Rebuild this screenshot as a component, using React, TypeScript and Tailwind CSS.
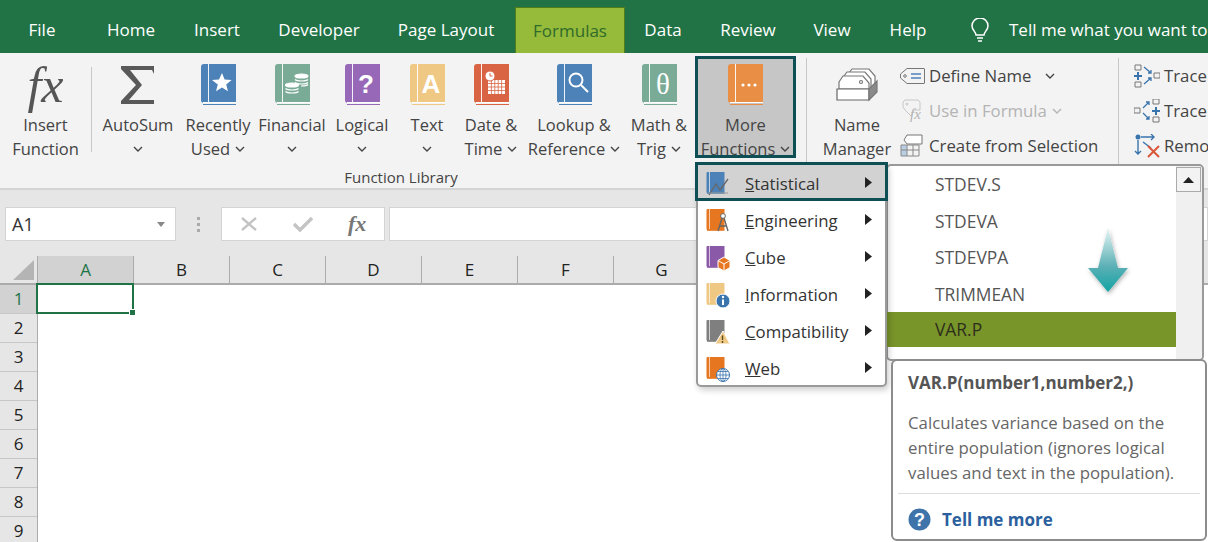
import type { ReactNode } from 'react'

const font = "font-['Open_Sans','Noto_Sans',sans-serif]"

function Chevron({ className = '' }: { className?: string }) {
  return (
    <svg width="10" height="6" viewBox="0 0 10 6" className={className}>
      <path d="M1 1l4 4 4-4" fill="none" stroke="#444" strokeWidth="1.4" />
    </svg>
  )
}

function Book({ color, children }: { color: string; children?: ReactNode }) {
  return (
    <svg width="35" height="41" viewBox="0 0 35 41">
      <path d="M3 0h32v39H3a3 3 0 0 1-3-3V3a3 3 0 0 1 3-3z" fill={color} />
      <rect x="7" y="0" width="1" height="38" fill="#fff" opacity="0.9" />
      <rect x="2" y="38" width="33" height="1" fill="#fff" />
      <rect x="2" y="40" width="33" height="1" fill={color} />
      {children}
    </svg>
  )
}

function Item({ w, color, glyph, lines, icon }: { w: string; color?: string; glyph?: ReactNode; lines: ReactNode[]; icon?: ReactNode }) {
  return (
    <div className={`${w} flex flex-col items-center shrink-0 pt-[11px] text-[#444]`}>
      <div className="h-[41px] flex items-center justify-center">{icon ?? <Book color={color!}>{glyph}</Book>}</div>
      <div className="mt-[8px] text-center leading-[24px] text-[16.5px] whitespace-nowrap">
        {lines.map((l, i) => (
          <div key={i} className="h-[24px] flex items-center justify-center gap-[5px]">{l}</div>
        ))}
      </div>
    </div>
  )
}

function Tab({ w, children }: { w: string; children: ReactNode }) {
  return <div className={`${w} text-center text-white text-[17px] shrink-0`}>{children}</div>
}

function MiniBook({ color, children }: { color: string; children?: ReactNode }) {
  return (
    <svg width="24" height="26" viewBox="0 0 24 26" className="shrink-0">
      <path d="M1.5 0h17v21h-17a1 1 0 0 1-1-1V1a1 1 0 0 1 1-1z" fill={color} />
      <rect x="3" y="0" width="0.8" height="20" fill="#fff" opacity="0.8" />
      <rect x="1" y="21" width="17.5" height="0.8" fill={color} />
      {children}
    </svg>
  )
}

function MenuRow({ label, letter, children, active }: { label: string; letter: string; children: ReactNode; active?: boolean }) {
  return (
    <div className="h-[37px] flex items-center relative z-10 text-[#333] text-[16.8px]">
      {active && <div className="absolute -left-[3px] -right-[3px] -top-[3px] bottom-[1px] -z-10 bg-[#d2d2d2] border-[3px] border-[#0e4f56]" />}
      <div className="w-[47px] pl-[8px] pt-[2px]">{children}</div>
      <span className="whitespace-nowrap">
        <u>{letter}</u>
        {label}
      </span>
      <svg width="7" height="11" viewBox="0 0 7 11" className="absolute left-[167px] top-[12px]">
        <path d="M0 0l7 5.5L0 11z" fill="#222" />
      </svg>
    </div>
  )
}

const rowNums = [1, 2, 3, 4, 5, 6, 7, 8, 9]
const cols = ['A', 'B', 'C', 'D', 'E', 'F', 'G', '', '', '', '', '']
const subItems = ['STDEV.S', 'STDEVA', 'STDEVPA', 'TRIMMEAN']

export default function App() {
  return (
    <div className={`${font} relative w-[1208px] h-[542px] overflow-hidden bg-white`}>
      {/* Tabs */}
      <div className="h-[53px] bg-[#217346] flex items-center pt-[7px] relative">
        <Tab w="w-[84px]">File</Tab>
        <Tab w="w-[94px]">Home</Tab>
        <Tab w="w-[78px]">Insert</Tab>
        <Tab w="w-[126px]">Developer</Tab>
        <Tab w="w-[128px]">Page Layout</Tab>
        <div className="w-[110px] h-[46px] ml-[5px] self-end flex items-center justify-center bg-[#96ba3a] border border-b-0 border-[#4f7d1a] text-[#2f6b2a] text-[17px] shrink-0">Formulas</div>
        <Tab w="w-[76px]">Data</Tab>
        <Tab w="w-[94px]">Review</Tab>
        <Tab w="w-[74px]">View</Tab>
        <Tab w="w-[78px]">Help</Tab>
        <svg width="20" height="25" viewBox="0 0 20 25" className="ml-[23px] shrink-0">
          <path d="M6 17c0-3-4-5-4-9a8 8 0 0 1 16 0c0 4-4 6-4 9z M7 20h6 M8 23h4" fill="none" stroke="#fff" strokeWidth="1.5" />
        </svg>
        <div className="ml-[19px] text-white text-[17px] whitespace-nowrap">Tell me what you want to</div>
      </div>

      {/* Ribbon */}
      <div className="h-[137px] bg-[#f3f3f3] border-b-2 border-[#d4d4d4] flex text-[#444]">
        <Item
          w="w-[91px]"
          lines={['Insert', 'Function']}
          icon={<span className="font-['Liberation_Serif',serif] italic text-[50px] text-[#555] leading-none">fx</span>}
        />
        <div className="w-px h-[85px] mt-[14px] bg-[#c8c8c8] shrink-0" />
        <div className="flex flex-col shrink-0 w-[604px]">
          <div className="flex h-[114px] pl-[6px]">
            <Item
              w="w-[80px]"
              lines={['AutoSum', <Chevron key="c" />]}
              icon={
                <svg width="34" height="38" viewBox="0 0 34 38">
                  <path d="M0 0h33v8l-2-4H9l12 15L8 34h25v4H0v-3l15-16L0 3z" fill="#595959" />
                </svg>
              }
            />
            <Item
              w="w-[80px]"
              color="#4d82b8"
              lines={['Recently', <>Used <Chevron key="c" /></>]}
              glyph={<path d="M21 9l2.6 6.6 7 .4-5.4 4.4 1.8 6.8-6-3.8-6 3.8 1.8-6.8L11 16l7-.4z" fill="#fff" />}
            />
            <Item
              w="w-[68px]"
              color="#7aab97"
              lines={['Financial', <Chevron key="c" />]}
              glyph={
                <g fill="none" stroke="#fff" strokeWidth="1.2">
                  <ellipse cx="26.5" cy="12" rx="6.5" ry="2" fill="#fff" />
                  <path d="M20 15.5c2 2 11 2 13 0M20 18.5c2 2 11 2 13 0M26 22c3 0 6-.5 7-1.5" />
                  <ellipse cx="17" cy="21" rx="6.5" ry="2" fill="#fff" />
                  <path d="M10.5 24.5c2 2 11 2 13 0M10.5 27.5c2 2 11 2 13 0" />
                </g>
              }
            />
            <Item
              w="w-[72px]"
              color="#9868b8"
              lines={['Logical', <Chevron key="c" />]}
              glyph={<text x="21" y="29" textAnchor="middle" fontSize="26" fontWeight="700" fill="#fff" fontFamily="Liberation Sans">?</text>}
            />
            <Item
              w="w-[58px]"
              color="#efc884"
              lines={['Text', <Chevron key="c" />]}
              glyph={<text x="21" y="29" textAnchor="middle" fontSize="26" fontWeight="700" fill="#fff" fontFamily="Liberation Sans">A</text>}
            />
            <Item
              w="w-[70px]"
              color="#d96444"
              lines={['Date &', <>Time <Chevron key="c" /></>]}
              glyph={
                <g>
                  <path d="M14 16h17v14H14z" fill="#fff" />
                  <path d="M17.4 16v14M20.8 16v14M24.2 16v14M27.6 16v14M14 19.5h17M14 23h17M14 26.5h17" stroke="#d96444" strokeWidth="0.8" />
                  <circle cx="16" cy="12" r="5" fill="#fff" stroke="#d96444" />
                  <path d="M16 9v3h2.5" fill="none" stroke="#d96444" strokeWidth="1" />
                </g>
              }
            />
            <Item
              w="w-[96px]"
              color="#4d82b8"
              lines={['Lookup &', <>Reference <Chevron key="c" /></>]}
              glyph={
                <g fill="none" stroke="#fff" strokeWidth="2">
                  <circle cx="19" cy="16" r="6.5" />
                  <path d="M24 21l7 7" />
                </g>
              }
            />
            <Item
              w="w-[74px]"
              color="#7aab97"
              lines={['Math &', <>Trig <Chevron key="c" /></>]}
              glyph={<text x="21" y="30" textAnchor="middle" fontSize="29" fill="#fff" fontFamily="Liberation Serif">θ</text>}
            />
          </div>
          <div className="text-center text-[15px] leading-[20px] pl-[14px]">Function Library</div>
        </div>
        <div className="w-[101px] h-[102px] -ml-[1px] mt-[3px] bg-[#c6c6c6] border-[3px] border-[#0e4f56] shrink-0 relative z-10 -mr-[10px]">
          <div className="-mt-[6px] -ml-[3px] w-[101px]">
            <Item
              w="w-[101px]"
              color="#e88f45"
              lines={['More', <>Functions <Chevron key="c" /></>]}
              glyph={
                <g fill="#fff">
                  <circle cx="15" cy="21" r="1.6" />
                  <circle cx="21" cy="21" r="1.6" />
                  <circle cx="27" cy="21" r="1.6" />
                </g>
              }
            />
          </div>
        </div>
        <div className="w-px h-[106px] mt-[5px] ml-[20px] bg-[#c8c8c8] shrink-0" />
        <div className="ml-[8px]">
          <Item
            w="w-[84px]"
            lines={['Name', 'Manager']}
            icon={
              <svg width="42" height="34" viewBox="0 0 42 34" fill="none" stroke="#777" strokeWidth="1.2">
                <path d="M13 5l3-4h17l6 7v10" fill="#fff" />
                <path d="M8 8l3-4h18l6 7v10" fill="#fff" />
                <path d="M3 14l4-6h20l6 7v6H3z" fill="#fff" />
                <circle cx="25" cy="14" r="1.5" />
                <path d="M1 21h32v11H1z" fill="#fff" stroke="#666" />
                <path d="M33 21l8-8v11l-8 8z" fill="#8a8a8a" />
              </svg>
            }
          />
        </div>
        <div className="w-[219px] shrink-0 flex flex-col pt-[5px] text-[16.8px]">
          <div className="h-[35px] flex items-center whitespace-nowrap">
            <svg width="25" height="16" viewBox="0 0 25 16" fill="none" className="ml-[1px] mr-[4px]">
              <path d="M7 .5h17a.5.5 0 0 1 .5.5v14a.5.5 0 0 1-.5.5H7L.5 10V6z" stroke="#777" />
              <circle cx="5" cy="8" r="1.3" stroke="#777" />
              <path d="M11 6h10M11 10h10" stroke="#4d82b8" strokeWidth="1.3" />
            </svg>
            Define Name
            <Chevron className="ml-[14px]" />
          </div>
          <div className="h-[35px] flex items-center whitespace-nowrap text-[#b4b4b4]">
            <svg width="24" height="24" viewBox="0 0 24 24" className="ml-[3px] mr-[3px]">
              <path d="M3 1h13l2 2v8l-6 0-3 6-6-6-2-3V3z" fill="none" stroke="#c6c6c6" />
              <circle cx="5" cy="5" r="1" fill="none" stroke="#c6c6c6" />
              <text x="8" y="20" fontSize="15" fontStyle="italic" fill="#b4b4b4" fontFamily="Liberation Serif">fx</text>
            </svg>
            Use in Formula
            <svg width="10" height="6" viewBox="0 0 10 6" className="ml-[5px]">
              <path d="M1 1l4 4 4-4" fill="none" stroke="#b4b4b4" strokeWidth="1.4" />
            </svg>
          </div>
          <div className="h-[35px] flex items-center whitespace-nowrap">
            <svg width="24" height="24" viewBox="0 0 24 24" fill="none" className="mr-[5px] ml-[1px]">
              <path d="M7 1h15v9H7L4 6z" stroke="#777" fill="#fff" />
              <path d="M1 11h6v5H1z" fill="#b9cfe6" />
              <path d="M1 16h6v6H1z" fill="#b9cfe6" />
              <path d="M1 11h18v11H1zM7 11v11M13 11v11M1 16h18" stroke="#888" />
            </svg>
            Create from Selection
          </div>
        </div>
        <div className="w-px h-[106px] mt-[5px] bg-[#c8c8c8] shrink-0" />
        <div className="flex flex-col pt-[5px] pl-[15px] text-[16.8px] shrink-0">
          <div className="h-[35px] flex items-center gap-[4px] whitespace-nowrap">
            <svg width="26" height="24" viewBox="0 0 26 24" fill="none">
              <path d="M1 1h6v5H1zM1 18h6v5H1zM20 9h6v5h-6z" stroke="#777" />
              <path d="M4 8v8M0 12h8" stroke="#3a74ad" strokeWidth="2" />
              <path d="M10 3l7 6M17 6v3h-3M10 20l7-6M17 17v-3h-3" stroke="#3a74ad" strokeWidth="1.3" />
            </svg>
            Trace
          </div>
          <div className="h-[35px] flex items-center gap-[4px] whitespace-nowrap">
            <svg width="26" height="24" viewBox="0 0 26 24" fill="none">
              <path d="M19 0h6v5h-6zM19 18h6v5h-6zM0 9h6v5H0z" stroke="#777" />
              <path d="M22 8v8M18 12h8" stroke="#3a74ad" strokeWidth="2" />
              <path d="M9 9l6-6M15 6V3h-3M9 14l6 6M15 17v3h-3" stroke="#3a74ad" strokeWidth="1.3" />
            </svg>
            Trace
          </div>
          <div className="h-[35px] flex items-center gap-[4px] whitespace-nowrap">
            <svg width="26" height="24" viewBox="0 0 26 24" fill="none">
              <circle cx="4" cy="3" r="2.5" fill="#3a74ad" />
              <path d="M7 3h13M17 0l3 3-3 3M4 6v14M1 17l3 3 3-3M9 8l8 6" stroke="#3a74ad" strokeWidth="1.4" />
              <path d="M14 12l11 11M25 12L14 23" stroke="#d9573a" strokeWidth="2" />
            </svg>
            Remo
          </div>
        </div>
      </div>

      {/* Formula bar */}
      <div className="h-[66px] bg-[#e6e6e6] flex items-start pt-[17px] pl-[5px]">
        <div className="w-[171px] h-[34px] bg-white border border-[#d4d4d4] flex items-center justify-between px-[6px] text-[18px] text-[#333] shrink-0">
          A1
          <svg width="8" height="5" viewBox="0 0 8 5" className="mr-[4px]">
            <path d="M0 0h8L4 5z" fill="#888" />
          </svg>
        </div>
        <div className="w-[45px] h-[34px] flex flex-col items-center justify-center gap-[3px] shrink-0">
          <div className="w-[3px] h-[3px] bg-[#aaa]" />
          <div className="w-[3px] h-[3px] bg-[#aaa]" />
          <div className="w-[3px] h-[3px] bg-[#aaa]" />
        </div>
        <div className="w-[164px] h-[34px] bg-white border border-[#d4d4d4] flex items-center shrink-0">
          <svg width="18" height="16" viewBox="0 0 18 16" className="ml-[18px]">
            <path d="M2 2l14 12M16 2L2 14" stroke="#c4c4c4" strokeWidth="2.4" />
          </svg>
          <svg width="20" height="16" viewBox="0 0 20 16" className="ml-[35px]">
            <path d="M1 8l6 6L19 2" fill="none" stroke="#c4c4c4" strokeWidth="3.4" />
          </svg>
          <span className="ml-[35px] font-['Liberation_Serif',serif] italic font-bold text-[22px] text-[#777] leading-none">fx</span>
        </div>
        <div className="flex-1 h-[34px] ml-[4px] bg-white border border-[#d4d4d4]" />
      </div>

      {/* Column headers */}
      <div className="h-[29px] bg-[#e6e6e6] flex border-b-2 border-[#ababab]">
        <div className="w-[38px] shrink-0 relative border-r border-[#ababab]">
          <div className="absolute right-[3px] bottom-[3px] w-0 h-0 border-l-[21px] border-l-transparent border-b-[20px] border-b-[#b4b4b4]" />
        </div>
        {cols.map((c, i) => (
          <div
            key={i}
            className={`w-[96px] shrink-0 flex items-center justify-center text-[17px] border-r border-[#ababab] ${i === 0 ? 'bg-[#d2d2d2] text-[#217346]' : 'text-[#222]'}`}
          >
            {c}
          </div>
        ))}
      </div>

      {/* Sheet */}
      <div className="flex">
        <div className="w-[38px] shrink-0 bg-[#e6e6e6] border-r border-[#ababab]">
          {rowNums.map((n, i) => (
            <div
              key={n}
              className={`h-[29px] flex items-center justify-center text-[17px] border-b border-[#c6c6c6] ${i === 0 ? 'bg-[#d2d2d2] text-[#217346]' : 'text-[#222]'}`}
            >
              {n}
            </div>
          ))}
        </div>
        <div className="w-[98px] h-[31px] -mt-[2px] -ml-[2px] border-2 border-[#217346] relative shrink-0">
          <div className="absolute -right-[4px] -bottom-[4px] w-[7px] h-[7px] bg-[#217346] border border-white" />
        </div>
      </div>

      {/* More Functions menu */}
      <div className="absolute left-[696px] top-[163px] w-[191px] h-[224px] bg-white border-2 border-[#9a9a9a] rounded-[5px] shadow-[2px_3px_6px_rgba(0,0,0,0.2)] z-[25]">
        <MenuRow label="tatistical" letter="S" active>
          <MiniBook color="#4d82b8">
            <path d="M3 23L10 12l4 6 8-11" fill="none" stroke="#666" strokeWidth="1.3" />
            <path d="M2 21h20" stroke="#999" />
          </MiniBook>
        </MenuRow>
        <MenuRow label="ngineering" letter="E">
          <MiniBook color="#e6761f">
            <circle cx="17" cy="7" r="2.4" fill="#fff" stroke="#666" />
            <path d="M16 9l-4 13M18 9l4 13M13 17h8" fill="none" stroke="#666" strokeWidth="1.4" />
          </MiniBook>
        </MenuRow>
        <MenuRow label="ube" letter="C">
          <MiniBook color="#8a5aa8">
            <path d="M18 11l6 3.5v7L18 25l-6-3.5v-7z" fill="#e6761f" stroke="#fff" />
            <path d="M12 14.5l6 3.5 6-3.5M18 18v7" fill="none" stroke="#fff" />
          </MiniBook>
        </MenuRow>
        <MenuRow label="nformation" letter="I">
          <MiniBook color="#efc884">
            <circle cx="17" cy="18" r="7" fill="#3a74ad" stroke="#fff" />
            <path d="M17 16.5v5.5" stroke="#fff" strokeWidth="2" />
            <circle cx="17" cy="14" r="1.2" fill="#fff" />
          </MiniBook>
        </MenuRow>
        <MenuRow label="ompatibility" letter="C">
          <MiniBook color="#7f7f7f">
            <path d="M17 11l7 13H9z" fill="#efc884" stroke="#fff" />
            <path d="M16.5 15.5v4.5M16.5 21v2" stroke="#5c4a1f" strokeWidth="1.4" />
          </MiniBook>
        </MenuRow>
        <MenuRow label="eb" letter="W">
          <MiniBook color="#e6761f">
            <circle cx="17" cy="18" r="6.5" fill="#fff" stroke="#3a74ad" />
            <path d="M10.5 18h13M17 11.5v13M12 14.5h10M12 21.5h10" stroke="#3a74ad" strokeWidth="0.8" />
            <ellipse cx="17" cy="18" rx="3" ry="6.5" fill="none" stroke="#3a74ad" strokeWidth="0.8" />
          </MiniBook>
        </MenuRow>
      </div>

      {/* Function list */}
      <div className="absolute left-[886px] top-[164px] w-[318px] h-[197px] bg-white border-2 border-[#9a9a9a] rounded-[5px] z-20 flex">
        <div className="w-[288px] shrink-0">
          {subItems.map(s => (
            <div key={s} className="h-[36.5px] flex items-center pl-[47px] text-[17.4px] text-[#555]">{s}</div>
          ))}
          <div className="h-[35px] flex items-center text-[17.4px] text-[#2e2e1c] bg-[#789529] -ml-[2px] pl-[49px]">VAR.P</div>
        </div>
        <div className="flex-1 bg-[#f0f0f0] rounded-r-[4px] pt-[1px]">
          <div className="w-[25px] h-[25px] bg-[#f3f3f3] border border-[#aaa] flex items-center justify-center">
            <svg width="11" height="6" viewBox="0 0 11 6">
              <path d="M0 6l5.5-6L11 6z" fill="#222" />
            </svg>
          </div>
        </div>
      </div>

      {/* Scroll hint arrow */}
      <svg width="52" height="76" viewBox="0 0 52 76" className="absolute left-[1082px] top-[226px] z-30">
        <defs>
          <linearGradient id="hint" x1="0" y1="0" x2="0" y2="1">
            <stop offset="0" stopColor="#e6f5f5" />
            <stop offset="0.6" stopColor="#5bb0b5" />
            <stop offset="1" stopColor="#12a3a3" />
          </linearGradient>
          <filter id="hintShadow" x="-30%" y="-30%" width="160%" height="160%">
            <feDropShadow dx="1" dy="2" stdDeviation="2" floodColor="#000" floodOpacity="0.3" />
          </filter>
        </defs>
        <path d="M26 2L36 42H46L26 66 6 42H16z" fill="url(#hint)" filter="url(#hintShadow)" />
      </svg>

      {/* Tooltip */}
      <div className="absolute left-[891px] top-[359px] w-[316px] h-[182px] bg-white border-2 border-[#8c8c8c] rounded-[6px] z-30 flex flex-col">
        <div className="pl-[15px] pt-[11px] text-[17px] leading-[22px] font-bold text-[#555] whitespace-nowrap">VAR.P(number1,number2,)</div>
        <div className="pl-[15px] pt-[16px] text-[16.8px] leading-[25px] text-[#666] whitespace-nowrap">
          <div>Calculates variance based on the</div>
          <div>entire population (ignores logical</div>
          <div>values and text in the population).</div>
        </div>
        <div className="h-px bg-[#dcdcdc] mx-[5px] mt-[8px]" />
        <div className="flex items-center pl-[15px] pt-[13px] gap-[11px]">
          <svg width="23" height="23" viewBox="0 0 23 23">
            <circle cx="11.5" cy="11.5" r="11" fill="#3f74ab" />
            <text x="11.5" y="18" textAnchor="middle" fontSize="18" fontWeight="700" fill="#fff" fontFamily="Liberation Sans">?</text>
          </svg>
          <span className="text-[17px] font-bold text-[#2c5f9e]">Tell me more</span>
        </div>
      </div>
    </div>
  )
}
